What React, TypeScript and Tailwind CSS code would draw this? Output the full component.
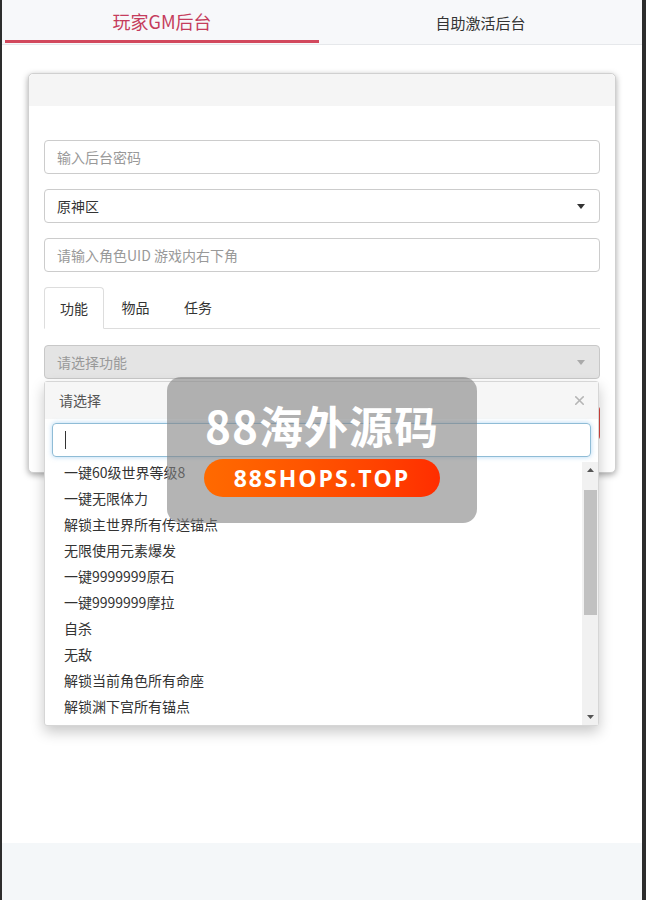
import { X } from "lucide-react";

const items = [
  "一键60级世界等级8",
  "一键无限体力",
  "解锁主世界所有传送锚点",
  "无限使用元素爆发",
  "一键9999999原石",
  "一键9999999摩拉",
  "自杀",
  "无敌",
  "解锁当前角色所有命座",
  "解锁渊下宫所有锚点",
];

const font = { fontFamily: '"Noto Sans CJK SC", "Liberation Sans", sans-serif' };

function Caret({ color }: { color: string }) {
  return (
    <svg width="8" height="5" viewBox="0 0 8 5" className="shrink-0">
      <path d="M0 0 L8 0 L4 5 Z" fill={color} />
    </svg>
  );
}

export default function App() {
  return (
    <div
      className="relative flex min-h-[900px] flex-col border-l-2 border-r-4 border-l-[#2d2d2d] border-r-[#2d2d2d] bg-white text-[#333]"
      style={font}
    >
      {/* top nav */}
      <div className="flex h-[45px] border-b border-[#e6e8eb] bg-[#f7f8fa]">
        <div className="flex w-[314px] ml-[3px] flex-col items-center justify-between">
          <div className="pt-[9px] text-[18px] leading-[24px] text-[#c53c5c]">玩家GM后台</div>
          <div className="h-[3px] w-full bg-[#d2485d] mb-[1px]" />
        </div>
        <div className="flex flex-1 justify-center pt-[12px] text-[15px] leading-[22px] text-[#333]">自助激活后台</div>
      </div>

      {/* card */}
      <div className="mx-[26px] mt-[28px] rounded-[5px] border border-[#d0d0d0] bg-white shadow-[0_2px_6px_rgba(0,0,0,0.35)]">
        <div className="h-[32px] rounded-t-[5px] bg-[#f5f5f5]" />
        <div className="flex flex-col px-[15px] pt-[34px] pb-[32px]">
          <div className="flex h-[34px] items-center rounded-[4px] border border-[#ccc] px-[12px] text-[14px] text-[#999]">
            输入后台密码
          </div>
          <div className="mt-[15px] flex h-[34px] items-center justify-between rounded-[4px] border border-[#ccc] pl-[12px] pr-[14px] text-[14px] text-[#333]">
            <span>原神区</span>
            <Caret color="#333" />
          </div>
          <div className="mt-[15px] flex h-[34px] items-center rounded-[4px] border border-[#ccc] px-[12px] text-[14px] text-[#999]">
            请输入角色UID 游戏内右下角
          </div>

          {/* tabs */}
          <div className="mt-[15px] flex h-[42px] border-b border-[#ddd] text-[14px]">
            <div className="-mb-px flex w-[60px] items-center justify-center rounded-t-[4px] border border-b-white border-[#ddd] bg-white">
              功能
            </div>
            <div className="flex w-[63px] items-center justify-center">物品</div>
            <div className="flex w-[62px] items-center justify-center">任务</div>
          </div>

          <div className="mt-[16px] flex h-[34px] items-center justify-between rounded-[4px] border border-[#c8c8c8] bg-[#e4e4e4] pl-[12px] pr-[14px] text-[14px] text-[#999]">
            <span>请选择功能</span>
            <Caret color="#aaa" />
          </div>

          <div className="mt-[27px] h-[34px] rounded-[4px] bg-[#d9463f]" />
        </div>
      </div>

      <div className="flex-1" />
      <div className="h-[57px] bg-[#f4f7f9]" />

      {/* dropdown overlay */}
      <div className="absolute left-[42px] top-[381px] w-[555px] rounded-[3px] border border-[#d6d6d6] bg-white shadow-[0_6px_14px_rgba(0,0,0,0.22)]">
        <div className="flex h-[37px] items-center justify-between bg-[#f6f6f6] pl-[14px] pr-[11px] text-[14px] text-[#555]">
          <span>请选择</span>
          <X size={15} strokeWidth={2.5} color="#b5b5b5" />
        </div>
        <div className="px-[7px] pt-[4px] pb-[5px]">
          <div className="flex h-[34px] items-center rounded-[4px] border border-[#8fbcd6] px-[12px] shadow-[0_0_5px_rgba(102,175,233,0.5)]">
            <div className="h-[18px] w-px bg-[#333]" />
          </div>
        </div>
        <div className="flex h-[263px]">
          <div className="-mt-[3px] flex-1 pl-[19px] text-[14px] text-[#333]">
            {items.map((t) => (
              <div key={t} className="flex h-[26px] items-center">
                {t}
              </div>
            ))}
          </div>
          <div className="flex w-[16px] flex-col items-center bg-[#f1f1f1]">
            <div className="flex h-[16px] items-center justify-center">
              <svg width="7" height="4" viewBox="0 0 7 4">
                <path d="M0 4 L7 4 L3.5 0 Z" fill="#555" />
              </svg>
            </div>
            <div className="mt-[12px] h-[125px] w-[13px] bg-[#c1c1c1]" />
            <div className="flex-1" />
            <div className="flex h-[16px] items-center justify-center">
              <svg width="7" height="4" viewBox="0 0 7 4">
                <path d="M0 0 L7 0 L3.5 4 Z" fill="#555" />
              </svg>
            </div>
          </div>
        </div>
      </div>

      {/* watermark */}
      <div className="absolute left-[165px] top-[377px] flex h-[146px] w-[310px] flex-col items-center rounded-[14px] bg-[rgba(130,130,130,0.6)]">
        <div className="mt-[20px] text-[44px] font-bold leading-[56px] text-white tracking-[1px]">88海外源码</div>
        <div className="mt-[6px] flex h-[38px] w-[236px] items-center justify-center rounded-full bg-gradient-to-r from-[#ff6a00] to-[#ff2d00] text-[23px] font-bold tracking-[2px] text-white" style={{ fontFamily: '"Open Sans", "Liberation Sans", sans-serif' }}>
          88SHOPS.TOP
        </div>
      </div>
    </div>
  );
}
